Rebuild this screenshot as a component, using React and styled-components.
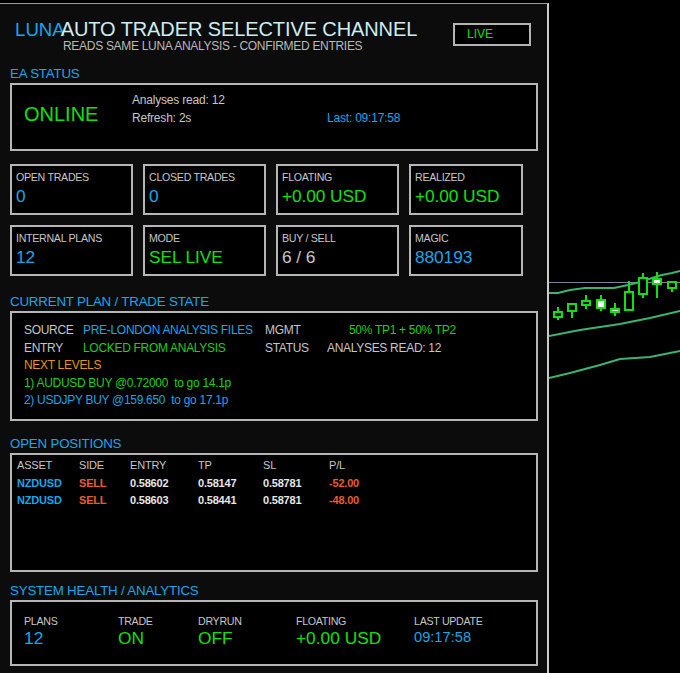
import React from "react";
import styled, { createGlobalStyle } from "styled-components";

const GlobalStyle = createGlobalStyle`
  html, body {
    margin: 0;
    padding: 0;
    background: #000;
  }
  body {
    font-family: "Liberation Sans", Arial, sans-serif;
    overflow: hidden;
  }
`;

const BLUE = "#19a6ea";
const GREEN = "#12e012";
const PLAN_GREEN = "#1dcf1d";
const GRAY = "#c6c6c6";
const ORANGE = "#e3960f";
const RED = "#e85c34";

const Screen = styled.div`
  display: flex;
  width: 680px;
  height: 673px;
  overflow: hidden;
`;

const Panel = styled.div`
  flex: none;
  width: 537px;
  height: 700px;
  margin-top: 3px;
  padding-left: 10px;
  border-top: 1px solid #9a9a9a;
  border-right: 2px solid #cacaca;
  background: #0c0c0c;
`;

const Header = styled.div`
  display: flex;
  justify-content: space-between;
  align-items: flex-start;
  padding-left: 5px;
`;

const TitleRow = styled.div`
  display: flex;
  align-items: baseline;
  margin-top: 15px;
  height: 20px;
  line-height: 20px;
  white-space: nowrap;
`;

const Luna = styled.span`
  font-size: 18.67px;
  color: ${BLUE};
`;

const Title = styled.span`
  font-size: 20px;
  margin-left: -4px;
  letter-spacing: -0.1px;
  color: #cdedf1;
`;

const Subtitle = styled.div`
  margin: 1px 0 0 48px;
  font-size: 12px;
  line-height: 12px;
  letter-spacing: -0.3px;
  color: #b9b9b9;
  white-space: nowrap;
`;

const LiveBox = styled.div`
  box-sizing: border-box;
  width: 78px;
  height: 23px;
  margin: 19px 16px 0 0;
  padding-left: 12px;
  border: 2px solid #b4b4b4;
  background: #000;
  color: ${GREEN};
  font-size: 12px;
  line-height: 19px;
`;

const SectionTitle = styled.div`
  margin-top: ${(p) => p.$top}px;
  margin-bottom: 1px;
  font-size: 13.33px;
  line-height: 16px;
  letter-spacing: -0.2px;
  color: ${BLUE};
`;

const Box = styled.div`
  box-sizing: border-box;
  width: 528px;
  height: ${(p) => p.$h}px;
  border: 2px solid #b6b6b6;
  background: #000;
`;

const StatusBox = styled(Box)`
  display: flex;
  padding-left: 12px;
`;

const Online = styled.div`
  width: 108px;
  padding-top: 19px;
  font-size: 20px;
  line-height: 20px;
  color: ${GREEN};
`;

const InfoCol = styled.div`
  width: ${(p) => p.$w || 195}px;
  padding-top: ${(p) => p.$top}px;
  font-size: 12px;
  line-height: 18px;
  letter-spacing: -0.2px;
  color: ${(p) => p.$c || GRAY};
  white-space: nowrap;
`;

const TileGrid = styled.div`
  display: grid;
  grid-template-columns: 123px 123px 123px 114px;
  gap: 10px;
  margin-top: 13px;
`;

const Tile = styled.div`
  box-sizing: border-box;
  height: 51px;
  padding: 5px 0 0 4px;
  border: 2px solid #b6b6b6;
  background: #000;
`;

const TileLabel = styled.div`
  font-size: 10.67px;
  line-height: 12px;
  letter-spacing: -0.3px;
  color: ${GRAY};
  white-space: nowrap;
`;

const TileValue = styled.div`
  margin-top: 3px;
  font-size: 17.33px;
  line-height: 20px;
  letter-spacing: -0.1px;
  color: ${(p) => p.$c};
  white-space: nowrap;
`;

const PlanBox = styled(Box)`
  padding: 9px 0 0 12px;
`;

const PlanRow = styled.div`
  display: flex;
  height: 17.5px;
  font-size: 12px;
  line-height: 17.5px;
  letter-spacing: -0.3px;
  white-space: pre;
`;

const Cell = styled.span`
  flex: none;
  width: ${(p) => (p.$w ? `${p.$w}px` : "auto")};
  color: ${(p) => p.$c || GRAY};
`;

const TableBox = styled(Box)`
  padding: 2px 0 0 5px;
`;

const TableRow = styled.div`
  display: grid;
  grid-template-columns: 62px 51px 68px 65px 66px auto;
  height: 17.5px;
  font-size: 11px;
  line-height: 17.5px;
  font-weight: ${(p) => (p.$head ? 400 : 700)};
  color: ${GRAY};
  white-space: nowrap;
`;

const TCell = styled.span`
  color: ${(p) => p.$c || "inherit"};
  font-weight: ${(p) => (p.$bold ? 700 : "inherit")};
  letter-spacing: -0.2px;
`;

const HealthBox = styled(Box)`
  display: grid;
  grid-template-columns: 94px 80px 98px 118px auto;
  padding: 12px 0 0 12px;
`;

const Metric = styled.div`
  display: flex;
  flex-direction: column;
`;

const MetricLabel = styled.div`
  font-size: 10.67px;
  line-height: 14px;
  letter-spacing: -0.3px;
  color: ${GRAY};
  white-space: nowrap;
`;

const MetricValue = styled.div`
  font-size: ${(p) => p.$size || 17.33}px;
  line-height: ${(p) => (p.$size ? 18 : 20)}px;
  color: ${(p) => p.$c};
  white-space: nowrap;
`;

const Chart = styled.div`
  flex: 1;
  height: 673px;
  background: #000;
`;

const tiles = [
  ["OPEN TRADES", "0", BLUE],
  ["CLOSED TRADES", "0", BLUE],
  ["FLOATING", "+0.00 USD", GREEN],
  ["REALIZED", "+0.00 USD", GREEN],
  ["INTERNAL PLANS", "12", BLUE],
  ["MODE", "SEL LIVE", GREEN],
  ["BUY / SELL", "6 / 6", GRAY],
  ["MAGIC", "880193", BLUE],
];

const positions = [
  ["NZDUSD", "SELL", "0.58602", "0.58147", "0.58781", "-52.00"],
  ["NZDUSD", "SELL", "0.58603", "0.58441", "0.58781", "-48.00"],
];

const health = [
  ["PLANS", "12", BLUE],
  ["TRADE", "ON", GREEN],
  ["DRYRUN", "OFF", GREEN],
  ["FLOATING", "+0.00 USD", GREEN],
];

// chart coordinates are page x minus 549
const candles = [
  { x: 4, top: 312, bot: 317, wt: 307, wb: 320, fill: false },
  { x: 18, top: 304, bot: 311, wt: 304, wb: 318, fill: false },
  { x: 32, top: 301, bot: 305, wt: 295, wb: 309, fill: false },
  { x: 47, top: 300, bot: 308, wt: 295, wb: 311, fill: true },
  { x: 61, top: 309, bot: 312, wt: 303, wb: 316, fill: true },
  { x: 75, top: 292, bot: 310, wt: 281, wb: 310, fill: false },
  { x: 89, top: 278, bot: 294, wt: 273, wb: 298, fill: false },
  { x: 103, top: 279, bot: 284, wt: 272, wb: 298, fill: true },
  { x: 118, top: 282, bot: 288, wt: 282, wb: 292, fill: false },
];

const PriceChart = () => (
  <svg width="131" height="673" viewBox="0 0 131 673">
    <line x1="0" y1="282.5" x2="131" y2="282.5" stroke="#7d8398" strokeWidth="1" />
    <polyline
      points="0,293 9,293 21,290 36,288 65,288 79,285 91,282 103,278 113,275 123,273 131,271"
      fill="none"
      stroke="#3cb371"
      strokeWidth="2"
    />
    <polyline
      points="0,336 31,330 71,324 101,318 131,311"
      fill="none"
      stroke="#3cb371"
      strokeWidth="2"
    />
    <polyline
      points="0,378 21,373 51,365 71,359 101,357 131,351"
      fill="none"
      stroke="#3cb371"
      strokeWidth="2"
    />
    {candles.map((c, i) => (
      <g key={i} stroke="#10e010" strokeWidth="2">
        <line x1={c.x + 5} y1={c.wt} x2={c.x + 5} y2={c.wb} />
        <rect
          x={c.x + 1}
          y={c.top}
          width="8"
          height={c.bot - c.top}
          fill={c.fill ? "#fff" : "#000"}
        />
      </g>
    ))}
  </svg>
);

export default function App() {
  return (
    <Screen>
      <GlobalStyle />
      <Panel>
        <Header>
          <div>
            <TitleRow>
              <Luna>LUNA</Luna>
              <Title>AUTO TRADER SELECTIVE CHANNEL</Title>
            </TitleRow>
            <Subtitle>READS SAME LUNA ANALYSIS - CONFIRMED ENTRIES</Subtitle>
          </div>
          <LiveBox>LIVE</LiveBox>
        </Header>

        <SectionTitle $top={14}>EA STATUS</SectionTitle>
        <StatusBox $h={68}>
          <Online>ONLINE</Online>
          <InfoCol $top={6}>
            <div>Analyses read: 12</div>
            <div>Refresh: 2s</div>
          </InfoCol>
          <InfoCol $top={24} $c={BLUE} $w={150}>
            Last: 09:17:58
          </InfoCol>
        </StatusBox>

        <TileGrid>
          {tiles.map(([label, value, color]) => (
            <Tile key={label}>
              <TileLabel>{label}</TileLabel>
              <TileValue $c={color}>{value}</TileValue>
            </Tile>
          ))}
        </TileGrid>

        <SectionTitle $top={18}>CURRENT PLAN / TRADE STATE</SectionTitle>
        <PlanBox $h={110}>
          <PlanRow>
            <Cell $w={59}>SOURCE</Cell>
            <Cell $w={182} $c={BLUE}>PRE-LONDON ANALYSIS FILES</Cell>
            <Cell $w={84}>MGMT</Cell>
            <Cell $c={PLAN_GREEN}>50% TP1 + 50% TP2</Cell>
          </PlanRow>
          <PlanRow>
            <Cell $w={59}>ENTRY</Cell>
            <Cell $w={182} $c={PLAN_GREEN}>LOCKED FROM ANALYSIS</Cell>
            <Cell $w={62}>STATUS</Cell>
            <Cell>ANALYSES READ: 12</Cell>
          </PlanRow>
          <PlanRow>
            <Cell $c={ORANGE}>NEXT LEVELS</Cell>
          </PlanRow>
          <PlanRow>
            <Cell $c={PLAN_GREEN}>1) AUDUSD BUY @0.72000  to go 14.1p</Cell>
          </PlanRow>
          <PlanRow>
            <Cell $c={BLUE}>2) USDJPY BUY @159.650  to go 17.1p</Cell>
          </PlanRow>
        </PlanBox>

        <SectionTitle $top={15}>OPEN POSITIONS</SectionTitle>
        <TableBox $h={119}>
          <TableRow $head>
            <TCell>ASSET</TCell>
            <TCell>SIDE</TCell>
            <TCell>ENTRY</TCell>
            <TCell>TP</TCell>
            <TCell>SL</TCell>
            <TCell>P/L</TCell>
          </TableRow>
          {positions.map((row, i) => (
            <TableRow key={i}>
              <TCell $c={BLUE}>{row[0]}</TCell>
              <TCell $c={RED}>{row[1]}</TCell>
              <TCell $c="#e6e6e6">{row[2]}</TCell>
              <TCell $c="#e6e6e6">{row[3]}</TCell>
              <TCell $c="#e6e6e6">{row[4]}</TCell>
              <TCell $c={RED}>{row[5]}</TCell>
            </TableRow>
          ))}
        </TableBox>

        <SectionTitle $top={11}>SYSTEM HEALTH / ANALYTICS</SectionTitle>
        <HealthBox $h={66}>
          {health.map(([label, value, color]) => (
            <Metric key={label}>
              <MetricLabel>{label}</MetricLabel>
              <MetricValue $c={color}>{value}</MetricValue>
            </Metric>
          ))}
          <Metric>
            <MetricLabel>LAST UPDATE</MetricLabel>
            <MetricValue $c={BLUE} $size={14.67}>09:17:58</MetricValue>
          </Metric>
        </HealthBox>
      </Panel>
      <Chart>
        <PriceChart />
      </Chart>
    </Screen>
  );
}
